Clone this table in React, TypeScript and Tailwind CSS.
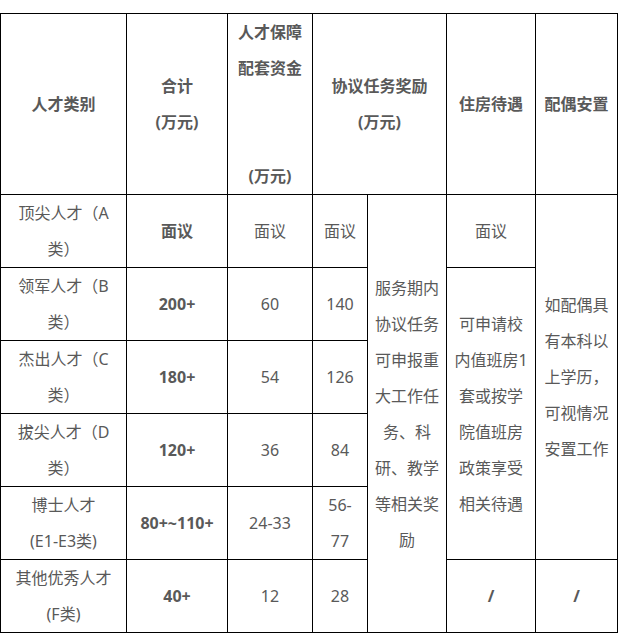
const TEXT = "text-[#595959]";

const rows = [
  { name: ["顶尖人才（A", "类）"], total: "面议", fund: "面议", task: ["面议"] },
  { name: ["领军人才（B", "类）"], total: "200+", fund: "60", task: ["140"] },
  { name: ["杰出人才（C", "类）"], total: "180+", fund: "54", task: ["126"] },
  { name: ["拔尖人才（D", "类）"], total: "120+", fund: "36", task: ["84"] },
  { name: ["博士人才", "(E1-E3类)"], total: "80+~110+", fund: "24-33", task: ["56-", "77"] },
  { name: ["其他优秀人才", "(F类)"], total: "40+", fund: "12", task: ["28"] },
];

const taskNote = ["服务期内", "协议任务", "可申报重", "大工作任", "务、科", "研、教学", "等相关奖", "励"];
const houseNote = ["可申请校", "内值班房1", "套或按学", "院值班房", "政策享受", "相关待遇"];
const spouseNote = ["如配偶具", "有本科以", "上学历，", "可视情况", "安置工作"];

function Lines({ lines }: { lines: string[] }) {
  return (
    <>
      {lines.map((l, i) => (
        <div key={i} className="h-[36px] whitespace-nowrap">
          {l}
        </div>
      ))}
    </>
  );
}

const cell = "border border-black px-1 py-0 text-center align-middle";

export default function App() {
  return (
    <div
      className={`min-h-[639px] bg-white pt-[13px] text-[16px] leading-[36px] ${TEXT}`}
      style={{ fontFamily: '"Noto Sans", "Noto Sans CJK SC", sans-serif' }}
    >
      <table className="w-[617px] table-fixed border-collapse">
        <colgroup>
          <col className="w-[126px]" />
          <col className="w-[101px]" />
          <col className="w-[85px]" />
          <col className="w-[55px]" />
          <col className="w-[79px]" />
          <col className="w-[89px]" />
          <col className="w-[82px]" />
        </colgroup>
        <tbody>
          <tr className="h-[181px] font-bold">
            <td className={cell}>人才类别</td>
            <td className={cell}>
              <Lines lines={["合计", "(万元)"]} />
            </td>
            <td className={cell}>
              <Lines lines={["人才保障", "配套资金", "", "", "(万元)"]} />
            </td>
            <td className={cell} colSpan={2}>
              <Lines lines={["协议任务奖励", "(万元)"]} />
            </td>
            <td className={cell}>住房待遇</td>
            <td className={cell}>配偶安置</td>
          </tr>
          {rows.map((r, i) => (
            <tr key={i} className="h-[73px]">
              <td className={cell}>
                <Lines lines={r.name} />
              </td>
              <td className={`${cell} font-bold`}>{r.total}</td>
              <td className={cell}>{r.fund}</td>
              <td className={cell}>
                <Lines lines={r.task} />
              </td>
              {i === 0 && (
                <td className={cell} rowSpan={6}>
                  <Lines lines={taskNote} />
                </td>
              )}
              {i === 0 && <td className={cell}>面议</td>}
              {i === 1 && (
                <td className={cell} rowSpan={4}>
                  <Lines lines={houseNote} />
                </td>
              )}
              {i === 0 && (
                <td className={cell} rowSpan={5}>
                  <Lines lines={spouseNote} />
                </td>
              )}
              {i === 5 && <td className={`${cell} font-bold`}>/</td>}
              {i === 5 && <td className={`${cell} font-bold`}>/</td>}
            </tr>
          ))}
        </tbody>
      </table>
    </div>
  );
}
